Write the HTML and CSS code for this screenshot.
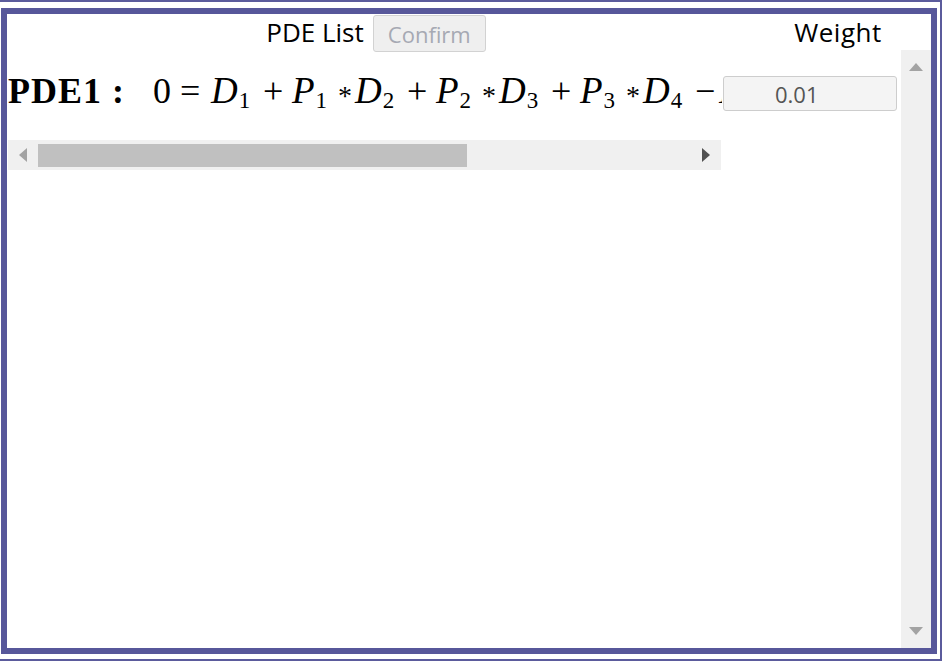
FILE: index.html
```html
<!DOCTYPE html>
<html>
<head>
<meta charset="utf-8">
<link rel="stylesheet" href="styles.css">
</head>
<body>
<div class="frame">
  <div class="panel">
    <div class="header">
      <div class="head-left">
        <span class="head-title">PDE List</span>
        <button class="confirm" disabled>Confirm</button>
      </div>
      <div class="head-right">
        <span class="head-title weight-title">Weight</span>
      </div>
    </div>
    <div class="body">
      <div class="content">
        <div class="row">
          <div class="eqcell">
            <div class="eqview">
              <div class="eqline"><span class="label"><span class="label-name">PDE1</span><span class="label-colon">:</span></span><span class="tk tk-0 rm">0</span><span class="tk tk-eq rm">=</span><span class="tk tk-d it">D<sub>1</sub></span><span class="tk tk-op rm">+</span><span class="tk tk-p it">P<sub>1</sub></span><span class="tk tk-ast">*</span><span class="tk tk-d it">D<sub>2</sub></span><span class="tk tk-op rm">+</span><span class="tk tk-p it">P<sub>2</sub></span><span class="tk tk-ast">*</span><span class="tk tk-d it">D<sub>3</sub></span><span class="tk tk-op rm">+</span><span class="tk tk-p it">P<sub>3</sub></span><span class="tk tk-ast">*</span><span class="tk tk-d it">D<sub>4</sub></span><span class="tk tk-minus rm">−</span><span class="tk tk-p it">P<sub>4</sub></span><span class="tk tk-ast">*</span><span class="tk tk-d it">D<sub>5</sub></span><span class="tk tk-minus rm">−</span><span class="tk tk-p it">P<sub>5</sub></span><span class="tk tk-ast">*</span><span class="tk tk-d it">D<sub>6</sub></span></div>
            </div>
            <div class="hscroll">
              <div class="sb-btn">
                <svg width="8" height="14" viewBox="0 0 8 14"><polygon points="8,0 8,14 0,7" fill="#a3a3a3"/></svg>
              </div>
              <div class="h-track"><div class="h-thumb"></div></div>
              <div class="sb-btn">
                <svg width="8" height="14" viewBox="0 0 8 14"><polygon points="0,0 0,14 8,7" fill="#505050"/></svg>
              </div>
            </div>
          </div>
          <div class="wcell">
            <input class="weight" type="text" value="0.01">
          </div>
        </div>
      </div>
      <div class="vscroll">
        <div class="vs-btn">
          <svg width="14" height="8" viewBox="0 0 14 8"><polygon points="0,8 14,8 7,0" fill="#a3a3a3"/></svg>
        </div>
        <div class="v-track"></div>
        <div class="vs-btn">
          <svg width="14" height="8" viewBox="0 0 14 8"><polygon points="0,0 14,0 7,8" fill="#a3a3a3"/></svg>
        </div>
      </div>
    </div>
  </div>
</div>
</body>
</html>
```

FILE: styles.css
```css
* { box-sizing: border-box; }

html, body {
  margin: 0;
  padding: 0;
  background: #ffffff;
  width: 944px;
  height: 662px;
  overflow: hidden;
}

.frame {
  width: 942px;
  height: 661px;
  border: 2px solid #5b5b9c;
  border-left: none;
  padding: 6px 3px 5px 1px;
}

.panel {
  width: 936px;
  height: 646px;
  border: 6px solid #57579a;
  display: flex;
  flex-direction: column;
  background: #ffffff;
}

.header {
  height: 36px;
  flex: 0 0 36px;
  display: flex;
  font-family: "Open Sans", "Noto Sans", sans-serif;
}

.head-left {
  width: 738px;
  display: flex;
  justify-content: center;
  align-items: flex-start;
}

.head-right {
  width: 186px;
  display: flex;
  justify-content: center;
  align-items: flex-start;
}

.head-title {
  font-size: 26px;
  line-height: 36px;
  color: #000000;
}

.weight-title {
  letter-spacing: 0.5px;
}

.confirm {
  margin: 1px 0 0 9px;
  width: 113px;
  height: 37px;
  padding: 0;
  font-family: "Open Sans", "Noto Sans", sans-serif;
  font-size: 22px;
  color: #a6a9b3;
  background: #efefef;
  border: 1px solid #d2d2d2;
  border-radius: 3px;
  position: relative;
  z-index: 1;
}

.body {
  flex: 1;
  display: flex;
  min-height: 0;
}

.content {
  flex: 1;
  min-width: 0;
}

.row {
  display: flex;
  align-items: flex-start;
}

.eqcell {
  margin-left: 1px;
  width: 714px;
}

.eqview {
  width: 714px;
  overflow: hidden;
}

.eqline {
  white-space: nowrap;
  height: 82px;
  line-height: 82px;
  font-family: "Liberation Serif", "DejaVu Serif", serif;
  font-size: 36px;
  color: #000000;
}

.label {
  display: inline-block;
  width: 145px;
  font-weight: bold;
}

.label-name {
  display: inline-block;
  width: 104px;
  letter-spacing: 1px;
  font-size: 36px;
}

.label-colon {
  font-size: 36px;
}

.tk {
  display: inline-block;
}

.it { font-style: italic; }
.rm { font-style: normal; }

.tk-d, .tk-p { font-size: 37px; }

.tk sub {
  font-style: normal;
  font-size: 23px;
  line-height: 0;
  vertical-align: -5px;
  margin-left: 1px;
}

.tk-0 { width: 27px; }
.tk-eq { width: 31px; }
.tk-d { width: 52px; }
.tk-p { width: 46px; }
.tk-op { width: 29px; }
.tk-minus { width: 24px; }
.tk-ast {
  width: 17px;
  font-size: 28px;
  vertical-align: -2px;
  line-height: 0;
}

.hscroll {
  margin-top: 8px;
  width: 713px;
  height: 30px;
  background: #f0f0f0;
  display: flex;
}

.sb-btn {
  width: 30px;
  flex: 0 0 30px;
  display: flex;
  align-items: center;
  justify-content: center;
}

.h-track {
  flex: 1;
  padding: 4px 0 3px 0;
}

.h-thumb {
  width: 429px;
  height: 23px;
  background: #c0c0c0;
}

.wcell {
  margin-left: 1px;
  padding-top: 26px;
}

.weight {
  width: 174px;
  height: 35px;
  padding: 0 0 0 51px;
  font-family: "Open Sans", "Noto Sans", sans-serif;
  font-size: 22px;
  color: #555555;
  background: #f4f4f4;
  border: 1px solid #cdcdcd;
  border-radius: 3px;
  outline: none;
}

.vscroll {
  width: 30px;
  flex: 0 0 30px;
  background: #f0f0f0;
  display: flex;
  flex-direction: column;
}

.vs-btn {
  height: 34px;
  flex: 0 0 34px;
  display: flex;
  align-items: center;
  justify-content: center;
}

.v-track {
  flex: 1;
}
```
